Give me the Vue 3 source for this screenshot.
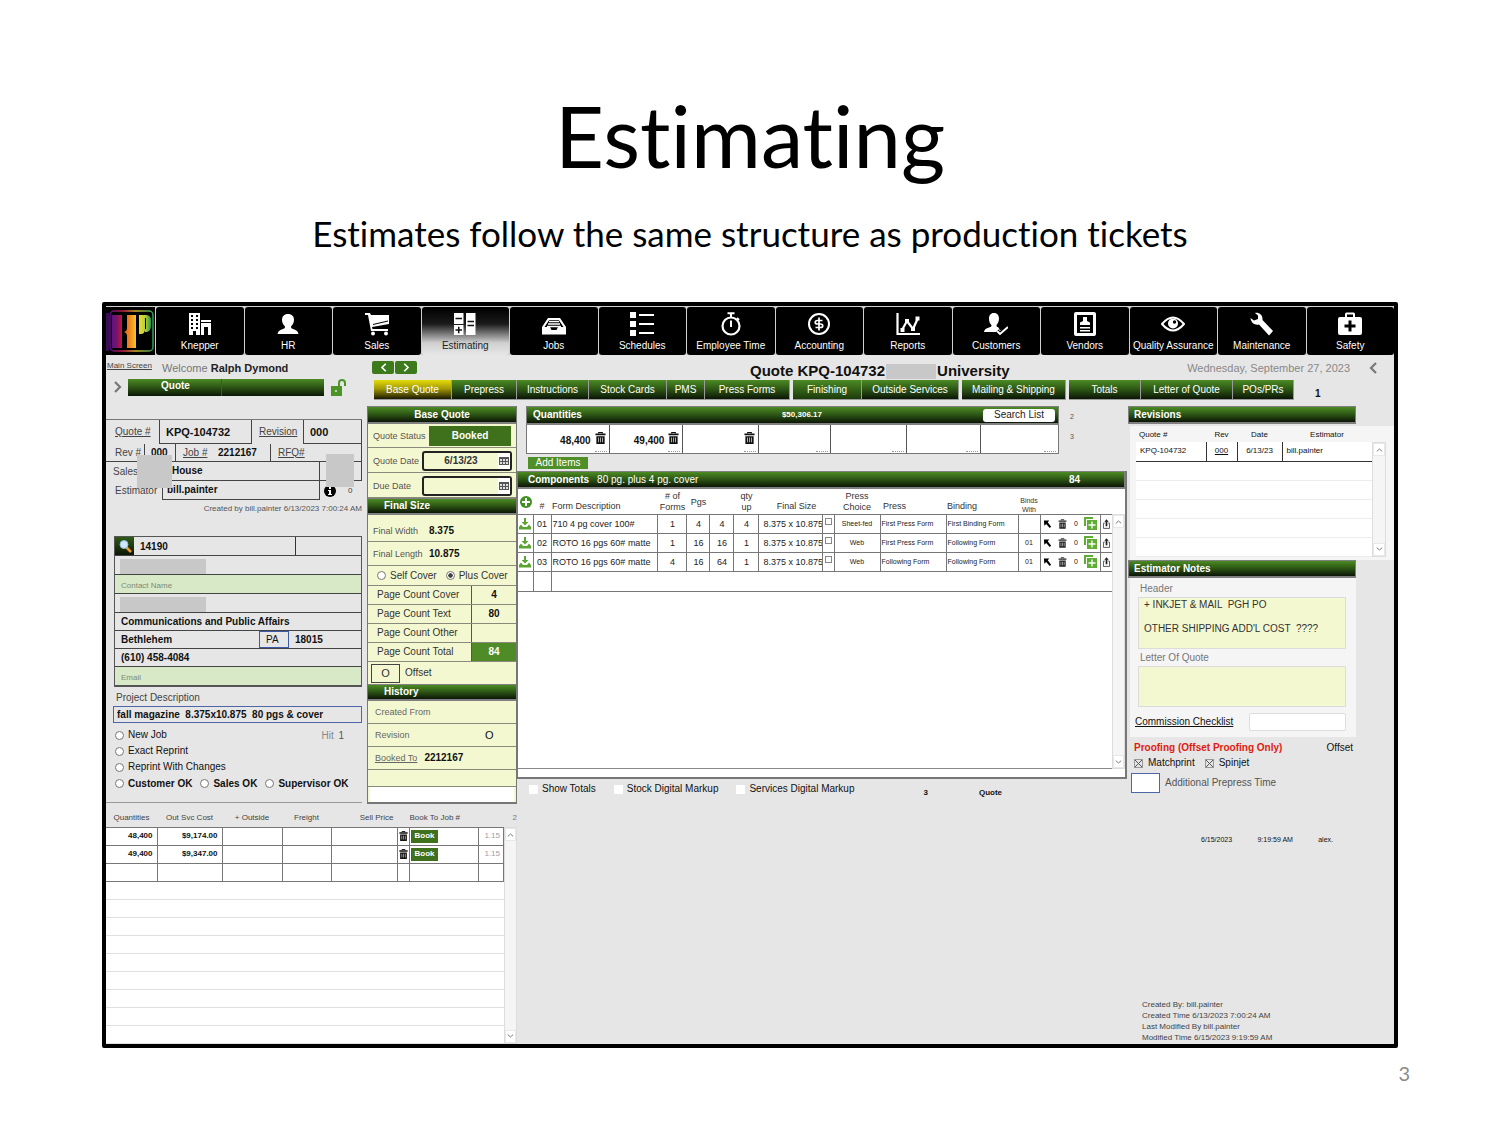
<script setup>
import { ref, reactive } from 'vue'

const modules = [
  { name: 'Knepper', icon: 'building' },
  { name: 'HR', icon: 'person' },
  { name: 'Sales', icon: 'cart' },
  { name: 'Estimating', icon: 'calc' },
  { name: 'Jobs', icon: 'inbox' },
  { name: 'Schedules', icon: 'list' },
  { name: 'Employee Time', icon: 'timer' },
  { name: 'Accounting', icon: 'dollar' },
  { name: 'Reports', icon: 'chart' },
  { name: 'Customers', icon: 'customer' },
  { name: 'Vendors', icon: 'vendor' },
  { name: 'Quality Assurance', icon: 'eye' },
  { name: 'Maintenance', icon: 'wrench' },
  { name: 'Safety', icon: 'safety' }
]
const activeModule = ref('Estimating')

const tabs = ['Base Quote', 'Prepress', 'Instructions', 'Stock Cards', 'PMS', 'Press Forms', 'Finishing',
  'Outside Services', 'Mailing & Shipping', 'Totals', 'Letter of Quote', 'POs/PRs']
const activeTab = ref('Base Quote')

const quote = reactive({
  number: 'KPQ-104732',
  revision: '000',
  rev: '000',
  job: '2212167',
  sales: 'House',
  estimator: 'bill.painter',
  customer: '14190',
  department: 'Communications and Public Affairs',
  city: 'Bethlehem',
  state: 'PA',
  zip: '18015',
  phone: '(610) 458-4084',
  description: 'fall magazine  8.375x10.875  80 pgs & cover',
  date: '6/13/23',
  due: '',
  cover: 'plus',
  header: "+ INKJET & MAIL  PGH PO\n\nOTHER SHIPPING ADD'L COST  ????",
  letter: '',
  commission: '',
  matchprint: true,
  spinjet: true
})

const jobType = ref('')
const approval = ref('')
const pageCounts = [
  { label: 'Page Count Cover', value: '4' },
  { label: 'Page Count Text', value: '80' },
  { label: 'Page Count Other', value: '' },
  { label: 'Page Count Total', value: '84', total: true }
]
const quantities = ['48,400', '49,400', '', null, null, null, null]

const components = [
  { no: '01', desc: '710 4 pg cover 100#', forms: '1', pgs: '4', pgs2: '4', up: '4', choice: 'Sheet-fed', press: 'First Press Form', binding: 'First Binding Form', binds: '' },
  { no: '02', desc: 'ROTO 16 pgs 60# matte', forms: '1', pgs: '16', pgs2: '16', up: '1', choice: 'Web', press: 'First Press Form', binding: 'Following Form', binds: '01' },
  { no: '03', desc: 'ROTO 16 pgs 60# matte', forms: '4', pgs: '16', pgs2: '64', up: '1', choice: 'Web', press: 'Following Form', binding: 'Following Form', binds: '01' }
]

const prices = [
  { qty: '48,400', cost: '$9,174.00' },
  { qty: '49,400', cost: '$9,347.00' }
]
</script>

<template>
  <div class="slide">
    <!-- icon set -->
    <svg class="defs" width="0" height="0">
      <symbol id="building" viewBox="0 0 24 24">
        <path fill="currentColor" fill-rule="evenodd" d="M1 1h11v22H8v-4H5v4H1zM3 3v2h2V3zM8 3v2h2V3zM3 7v2h2V7zM8 7v2h2V7zM3 11v2h2v-2zM8 11v2h2v-2zM3 15v2h2v-2zM8 15v2h2v-2zM13 8h10v2H13zM13 11h10v12h-3v-8h-4v8h-3z" />
      </symbol>
      <symbol id="person" viewBox="0 0 24 24">
        <path fill="currentColor" d="M12 2c4 0 6 2.500 6 6 0 3-1.500 5-3 6.500 0 1.500.5 2 2 2.500 3 .8 5 2 5.500 5h-21C2 19 4 17.800 7 17c1.500-.5 2-1 2-2.500C7.500 13 6 11 6 8c0-3.500 2-6 6-6z" />
      </symbol>
      <symbol id="cart" viewBox="0 0 24 24">
        <path fill="currentColor" d="M0 1h5l1 2h18v9L7 15l.5 2H23v2H6L3 3H0z" />
        <path stroke="#000" stroke-width="1" d="M8 12.500l15-3.500" />
        <circle cx="8" cy="21.500" r="2" fill="currentColor" /><circle cx="21" cy="21.500" r="2" fill="currentColor" />
      </symbol>
      <symbol id="calc" viewBox="0 0 24 24">
        <path fill="currentColor" d="M1 1h9.500v11H1zM1 13h9.500v10H1zM13 1h9.500v22H13z" />
        <path stroke="#111" stroke-width="1.500" d="M2.500 6.500H9M2.500 18H9M5.750 14.700v6.600M14.500 9.500H21M14.500 13.500H21" />
      </symbol>
      <symbol id="inbox" viewBox="0 0 24 24">
        <path fill="currentColor" d="M6 6h12l6 9v7.500H0V15zM7.200 8L2.500 15H8l1.500 3h5l1.500-3h5.500L16.800 8z" fill-rule="evenodd" />
        <path stroke="currentColor" stroke-width="1.400" d="M7 9.500h10M6 12h12M5 14.500h14" />
      </symbol>
      <symbol id="list" viewBox="0 0 24 24">
        <path fill="currentColor" d="M0 0h6v6H0zM0 9h6v6H0zM0 18h6v6H0zM9 2h15v2H9zM9 11h15v2H9zM9 20h15v2H9z" />
      </symbol>
      <symbol id="timer" viewBox="0 0 24 24">
        <circle cx="12" cy="14" r="8.500" fill="none" stroke="currentColor" stroke-width="2.200" />
        <path stroke="currentColor" stroke-width="2" fill="none" d="M8.500 1.300h7M12 1v4M12 8.500V15M18 6l2 2" />
      </symbol>
      <symbol id="dollar" viewBox="0 0 24 24">
        <circle cx="12" cy="12" r="10" fill="none" stroke="currentColor" stroke-width="2" />
        <path stroke="currentColor" stroke-width="1.700" fill="none" d="M15.500 8.500h-5c-3 0-3 3.500 0 3.500h3c3 0 3 3.500 0 3.500h-5M12 5.500v13" />
      </symbol>
      <symbol id="chart" viewBox="0 0 24 24">
        <path stroke="currentColor" stroke-width="2.200" fill="none" d="M1.500 1v21H24M6 18l5-9 6 8 5-11" />
        <path fill="currentColor" d="M4.500 16h4v4h-4zM9 7h4v4H9zM15 15h4v4h-4zM19.500 4.500h4v4h-4z" />
      </symbol>
      <symbol id="customer" viewBox="0 0 24 24">
        <path fill="currentColor" d="M10 1c3.500 0 5 2.500 5 5.500S13.500 12 12.500 13c0 1.500.5 2 2 2.500l1.500 3 3-1.500 0 3H0c.5-2.500 2-3.800 5-4.500 2-.5 2.500-1 2.500-2.500C6 12 5 9.500 5 6.500S6.500 1 10 1z" />
        <path stroke="#000" stroke-width="4" fill="none" d="M13 19l3 3 7-7" /><path stroke="currentColor" stroke-width="2" fill="none" d="M13 19l3 3 8-7" />
      </symbol>
      <symbol id="vendor" viewBox="0 0 24 24">
        <path fill="currentColor" fill-rule="evenodd" d="M3 0h18q2 0 2 2v20q0 2-2 2H3q-2 0-2-2V2q0-2 2-2zM4 3v18h16V3z" />
        <path fill="currentColor" d="M10 5h4v4l3 1.500V13H7v-2.500L10 9zM7 15h10v1.500H7zM7 18h10v1.500H7z" />
      </symbol>
      <symbol id="eye" viewBox="0 0 24 24">
        <path stroke="currentColor" stroke-width="2" fill="none" d="M1 12q11-13 22 0-11 13-22 0z" />
        <circle cx="12" cy="11.500" r="5" fill="currentColor" /><circle cx="13.500" cy="10" r="1.700" fill="#000" />
      </symbol>
      <symbol id="wrench" viewBox="0 0 24 24">
        <path fill="currentColor" d="M5 1c4-.8 8 2 7.500 7L23 19l-4 4.500-10-11C5 13.500 1 11 .5 6L4 8.500l4-1.500V3.500z" />
      </symbol>
      <symbol id="safety" viewBox="0 0 24 24">
        <path fill="currentColor" fill-rule="evenodd" d="M7 5V2q0-1.500 1.500-1.500h7Q17 .5 17 2v3h5q2 0 2 2v14q0 2-2 2H2q-2 0-2-2V7q0-2 2-2zM9 5h6V2.500H9zM10.500 8.500v4h-4v3h4v4h3v-4h4v-3h-4v-4z" />
      </symbol>
      <symbol id="trash" viewBox="0 0 12 14">
        <path fill="none" stroke="currentColor" stroke-width="1.200" d="M4 2V1h4v1" />
        <path fill="currentColor" fill-rule="evenodd" d="M.5 2h11v2H.5zM1.500 5h9v8.500h-9zM3.500 6.500v5h.7v-5zM5.700 6.500v5h.7v-5zM7.900 6.500v5h.7v-5z" />
      </symbol>
      <symbol id="up" viewBox="0 0 10 6"><path d="M1 5l4-3.500L9 5" fill="none" stroke="currentColor" stroke-width="1.300" /></symbol>
      <symbol id="down" viewBox="0 0 10 6"><path d="M1 1l4 3.500L9 1" fill="none" stroke="currentColor" stroke-width="1.300" /></symbol>
      <symbol id="left" viewBox="0 0 8 12"><path d="M7 1L2 6l5 5" fill="none" stroke="currentColor" stroke-width="2.200" /></symbol>
      <symbol id="right" viewBox="0 0 8 12"><path d="M1 1l5 5-5 5" fill="none" stroke="currentColor" stroke-width="2.200" /></symbol>
      <symbol id="calendar" viewBox="0 0 10 10">
        <path fill="#555" d="M0 1h10v8H0z" /><path fill="#ddd" d="M1 3h2v2H1zM4 3h2v2H4zM7 3h2v2H7zM1 6h2v2H1zM4 6h2v2H4zM7 6h2v2H7z" />
      </symbol>
      <symbol id="download" viewBox="0 0 12 12"><path fill="#5aa532" d="M5 0h2v4h2.500L6 7.500 2.500 4H5zM0 9l2-2.500L4 9h4l2-2.500L12 9v2.500H0z" /></symbol>
      <symbol id="arrow" viewBox="0 0 10 10"><path fill="#000" d="M1 1h6L5.300 3 9 8 7.500 9.500 3.500 5 1.500 7z" /></symbol>
      <symbol id="copy" viewBox="0 0 13 13"><path fill="#5fae33" d="M0 0h9v2H2v7H0zM3 3h10v10H3z" /><path stroke="#fff" stroke-width="1.300" d="M8 4.500v7M4.500 8h7" /></symbol>
      <symbol id="share" viewBox="0 0 8 11"><path fill="#222" d="M4 0l2.500 3H5v5H3V3H1.500z" /><path fill="none" stroke="#444" d="M2 4.500H.5v6h7v-6H6" /></symbol>
      <linearGradient id="gPurple"><stop offset="0" stop-color="#5c1480" /><stop offset=".5" stop-color="#7a1468" /><stop offset="1" stop-color="#c4183c" /></linearGradient>
      <linearGradient id="gOrange"><stop offset="0" stop-color="#e3601f" /><stop offset=".5" stop-color="#f08a1d" /><stop offset="1" stop-color="#f7c52b" /></linearGradient>
      <linearGradient id="gGreen"><stop offset="0" stop-color="#e6dc33" /><stop offset=".5" stop-color="#b9cf3a" /><stop offset="1" stop-color="#27984a" /></linearGradient>
      <linearGradient id="gFrame"><stop offset="0" stop-color="#55107a" /><stop offset=".3" stop-color="#c61f45" /><stop offset=".6" stop-color="#d8b52b" /><stop offset="1" stop-color="#2ba15a" /></linearGradient>
    </svg>

    <h1>Estimating</h1>
    <p class="subtitle">Estimates follow the same structure as production tickets</p>

    <div class="app">
      <nav class="modules">
        <a href="#" class="logo" aria-label="Home">
          <svg viewBox="0 0 49 48" preserveAspectRatio="none">
            <rect x="4" y="4" width="43" height="40" rx="4" fill="none" stroke="url(#gFrame)" stroke-width="1.500" />
            <path fill="#3c0b57" d="M0 6h3v38H0z" />
            <path fill="url(#gPurple)" d="M6 8h10v33H6z" />
            <path fill="url(#gOrange)" d="M21 8h9v33h-9V29q0-3-3-4 3-1 3-4z" />
            <path fill="url(#gGreen)" d="M33 8h8q4 1 4 5v5q0 6-4 7h-2v-3h1V11h-1v11q0 5-4 5h-2z" />
          </svg>
        </a>
        <button v-for="m in modules" :key="m.name" :class="{ on: activeModule === m.name }" @click="activeModule = m.name">
          <svg><use :href="'#' + m.icon" /></svg>
          <span>{{ m.name }}</span>
        </button>
      </nav>

      <header class="top">
        <div class="user">
          <div class="welcome">
            <a href="#">Main Screen</a>
            <p>Welcome <b>Ralph Dymond</b></p>
          </div>
          <div class="context">
            <svg class="chev"><use href="#right" /></svg>
            <div class="bar"><span>Quote</span><i></i></div>
            <svg class="lock" viewBox="0 0 16 17"><path fill="#4d9427" d="M0 7h11v10H0z" /><path fill="none" stroke="#4d9427" stroke-width="2" d="M8 8V4q0-3 3-3t3 3v3" /><circle cx="5" cy="12" r="1" fill="#e6e6e6" /></svg>
          </div>
        </div>
        <div class="heading">
          <div class="titleRow">
            <div class="pager">
              <button aria-label="Previous"><svg><use href="#left" /></svg></button>
              <button aria-label="Next"><svg><use href="#right" /></svg></button>
            </div>
            <h2>Quote KPQ-104732<i></i>University</h2>
            <p>Wednesday, September 27, 2023</p>
            <svg class="chev"><use href="#left" /></svg>
          </div>
          <div class="tabRow">
            <div class="tabs">
              <button v-for="t in tabs" :key="t" :class="{ on: activeTab === t }" @click="activeTab = t">{{ t }}</button>
            </div>
            <b>1</b>
          </div>
        </div>
      </header>

      <main class="body">
        <section class="leftSide">
          <div class="upper">
            <div class="info">
              <div class="line first">
                <label class="quoteLabel" for="qn"><u>Quote #</u></label>
                <input id="qn" v-model="quote.number" class="box big qnBox">
                <label class="revLabel" for="rv"><u>Revision</u></label>
                <input id="rv" v-model="quote.revision" class="box big grow">
              </div>
              <div class="line second">
                <label class="reLabel" for="re">Rev #</label>
                <input id="re" v-model="quote.rev" class="box reBox">
                <label class="jobLabel" for="jb"><u>Job #</u></label>
                <input id="jb" v-model="quote.job" class="jobBox">
                <a href="#" class="rfq">RFQ#</a>
              </div>
              <div class="line third">
                <label class="salesLabel" for="sl">Sales</label>
                <input id="sl" v-model="quote.sales" class="box salesBox">
                <span class="box grow"></span>
                <i class="mask maskA"></i><i class="mask maskB"></i>
              </div>
              <div class="line fourth">
                <label class="estLabel" for="es">Estimator</label>
                <input id="es" v-model="quote.estimator" class="box estBox">
                <svg class="infoIcon" viewBox="0 0 12 12"><circle cx="6" cy="6" r="6" /><path fill="#fff" d="M5 2h2v2H5zM4 5h3v4h1v1H4V9h1V6H4z" /></svg>
                <small>0</small>
              </div>
              <p class="created">Created by bill.painter 6/13/2023 7:00:24 AM</p>

              <div class="address">
                <div class="addr">
                  <button class="search" aria-label="Search"><svg viewBox="0 0 14 14"><path stroke="#f0962a" stroke-width="2.500" d="M8.500 8.500L13 13" /><circle cx="6" cy="5.500" r="4" fill="#cfe6fb" stroke="#8bb8e0" /></svg></button>
                  <input v-model="quote.customer" aria-label="Customer number" class="custNo"><span class="custExtra"></span>
                </div>
                <div class="addr"><i class="hidden"></i></div>
                <div class="addr green"><input placeholder="Contact Name" aria-label="Contact Name"></div>
                <div class="addr"><i class="hidden"></i></div>
                <div class="addr"><input v-model="quote.department" aria-label="Department"></div>
                <div class="addr">
                  <input v-model="quote.city" aria-label="City" class="city">
                  <input v-model="quote.state" aria-label="State" class="state">
                  <input v-model="quote.zip" aria-label="Zip" class="zip">
                </div>
                <div class="addr"><input v-model="quote.phone" aria-label="Phone"></div>
                <div class="addr green"><input placeholder="Email" aria-label="Email"></div>
              </div>

              <label class="projLabel" for="pd">Project Description</label>
              <input id="pd" v-model="quote.description" class="project">
              <div class="types">
                <div>
                  <label v-for="t in ['New Job', 'Exact Reprint', 'Reprint With Changes']" :key="t">
                    <input v-model="jobType" type="radio" name="type" :value="t">{{ t }}
                  </label>
                </div>
                <p>Hit <span>1</span></p>
              </div>
              <div class="approvals">
                <label v-for="t in ['Customer OK', 'Sales OK', 'Supervisor OK']" :key="t">
                  <input v-model="approval" type="radio" name="approval" :value="t">{{ t }}
                </label>
              </div>
            </div>

            <div class="base">
              <h3 class="center">Base Quote</h3>
              <div class="row r24"><span class="lab">Quote Status</span><button class="booked">Booked</button></div>
              <div class="row r25">
                <label class="lab" for="qd">Quote Date</label>
                <div class="date"><input id="qd" v-model="quote.date"><button aria-label="Pick quote date"><svg><use href="#calendar" /></svg></button></div>
              </div>
              <div class="row r25">
                <label class="lab" for="dd">Due Date</label>
                <div class="date"><input id="dd" v-model="quote.due"><button aria-label="Pick due date"><svg><use href="#calendar" /></svg></button></div>
              </div>
              <h3>Final Size</h3>
              <div class="row r27"><span class="lab size">Final Width</span><b>8.375</b></div>
              <div class="row r24"><span class="lab size">Final Length</span><b>10.875</b></div>
              <div class="row r20 covers">
                <label><input v-model="quote.cover" type="radio" name="cover" value="self">Self Cover</label>
                <label><input v-model="quote.cover" type="radio" name="cover" value="plus">Plus Cover</label>
              </div>
              <div v-for="p in pageCounts" :key="p.label" class="row r19">
                <span class="pageLabel">{{ p.label }}</span><b class="pageValue" :class="{ total: p.total }">{{ p.value }}</b>
              </div>
              <div class="row r22"><span class="offBox">O</span><span class="off">Offset</span></div>
              <h3>History</h3>
              <div class="row r23 hist"><span>Created From</span></div>
              <div class="row r23 hist"><span class="grow">Revision</span><span class="zero">O</span></div>
              <div class="row r23 hist"><a href="#">Booked To</a><b>2212167</b></div>
              <div class="row r17"></div>
              <div class="blank"></div>
            </div>
          </div>

          <div class="lower">
            <table class="prices">
              <colgroup><col class="p1"><col class="p2"><col class="p3"><col class="p4"><col><col class="p6"><col class="p7"><col class="p8"></colgroup>
              <thead>
                <tr><th>Quantities</th><th>Out Svc Cost</th><th>+ Outside</th><th>Freight</th><th class="right" colspan="2">Sell Price</th><th class="left" colspan="2">Book To Job #</th></tr>
              </thead>
              <tbody>
                <tr v-for="p in prices" :key="p.qty" class="filled">
                  <td class="right">{{ p.qty }}</td><td class="right">{{ p.cost }}</td><td></td><td></td><td></td>
                  <td class="bin"><button aria-label="Delete"><svg><use href="#trash" /></svg></button></td>
                  <td class="bk"><button>Book</button></td><td class="pale">1.15</td>
                </tr>
                <tr class="filled"><td v-for="n in 8" :key="n"></td></tr>
                <tr v-for="n in 9" :key="'e' + n" class="empty"><td colspan="8"></td></tr>
              </tbody>
            </table>
            <div class="side">
              <span>2</span>
              <div class="scroll">
                <button aria-label="Scroll up"><svg><use href="#up" /></svg></button>
                <button aria-label="Scroll down"><svg><use href="#down" /></svg></button>
              </div>
            </div>
          </div>
        </section>

        <section class="middle">
          <div class="qtyRow">
            <div class="qty">
              <h3><span>Quantities</span><small>$50,306.17</small><button>Search List</button></h3>
              <div class="cells">
                <div v-for="(q, i) in quantities" :key="i">
                  <b>{{ q }}</b>
                  <svg v-if="q !== null"><use href="#trash" /></svg>
                  <i></i>
                </div>
              </div>
            </div>
            <div class="nums"><span>2</span><span>3</span></div>
          </div>
          <button class="add">Add Items</button>

          <div class="comp">
            <h3><span>Components</span><em>80 pg. plus 4 pg. cover</em><b>84</b></h3>
            <div class="compBody">
              <table>
                <colgroup>
                  <col class="w15"><col class="w18"><col><col class="w29"><col class="w23"><col class="w24"><col class="w25"><col class="w64"><col class="w11"><col class="w46"><col class="w66"><col class="w72"><col class="w22"><col class="w60"><col class="w13">
                </colgroup>
                <thead>
                  <tr>
                    <th><svg class="plus" viewBox="0 0 12 12"><circle cx="6" cy="6" r="6" fill="#3f8f22" /><path stroke="#fff" stroke-width="2" d="M6 2v8M2 6h8" /></svg></th>
                    <th class="low">#</th><th class="low left flush">Form Description</th><th># of<br>Forms</th><th>Pgs</th><th></th><th>qty<br>up</th>
                    <th class="low" colspan="2">Final Size</th><th>Press<br>Choice</th><th class="low left">Press</th><th class="low left flush">Binding</th><th class="tiny">Binds<br>With</th><th colspan="2"></th>
                  </tr>
                </thead>
                <tbody>
                  <tr v-for="c in components" :key="c.no">
                    <td><svg class="dl"><use href="#download" /></svg></td>
                    <td>{{ c.no }}</td>
                    <td class="left">{{ c.desc }}</td>
                    <td>{{ c.forms }}</td><td>{{ c.pgs }}</td><td>{{ c.pgs2 }}</td><td>{{ c.up }}</td>
                    <td class="fs">8.375 x 10.875</td>
                    <td><input type="checkbox" :aria-label="'Lock size ' + c.no"></td>
                    <td class="sm">{{ c.choice }}</td><td class="sm left">{{ c.press }}</td><td class="sm left">{{ c.binding }}</td><td class="sm">{{ c.binds }}</td>
                    <td>
                      <div class="acts">
                        <svg><use href="#arrow" /></svg><svg><use href="#trash" /></svg><span>0</span><svg class="cp"><use href="#copy" /></svg>
                      </div>
                    </td>
                    <td><svg class="sh"><use href="#share" /></svg></td>
                  </tr>
                  <tr class="last"><td></td><td></td><td colspan="13"></td></tr>
                </tbody>
              </table>
              <div class="scroll">
                <button aria-label="Scroll up"><svg><use href="#up" /></svg></button>
                <button aria-label="Scroll down"><svg><use href="#down" /></svg></button>
              </div>
            </div>
            <div class="compFoot"></div>
          </div>
          <div class="options">
            <label><input type="checkbox">Show Totals</label>
            <label><input type="checkbox">Stock Digital Markup</label>
            <label><input type="checkbox">Services Digital Markup</label>
            <b>3</b><b>Quote</b>
          </div>
        </section>

        <section class="rightSide">
          <h3>Revisions</h3>
          <div class="revPanel">
            <table>
              <colgroup><col class="v1"><col class="v2"><col class="v3"><col></colgroup>
              <thead><tr><th class="left">Quote #</th><th>Rev</th><th>Date</th><th>Estimator</th></tr></thead>
              <tbody>
                <tr class="item"><td>KPQ-104732</td><td class="mid"><a href="#">000</a></td><td class="mid">6/13/23</td><td>bill.painter</td></tr>
                <tr v-for="n in 5" :key="n"><td colspan="4"></td></tr>
              </tbody>
            </table>
            <div class="scroll">
              <button aria-label="Scroll up"><svg><use href="#up" /></svg></button>
              <button aria-label="Scroll down"><svg><use href="#down" /></svg></button>
            </div>
          </div>
          <h3>Estimator Notes</h3>
          <div class="notes">
            <label for="hd">Header</label>
            <textarea id="hd" v-model="quote.header" class="tall"></textarea>
            <label for="lq">Letter Of Quote</label>
            <textarea id="lq" v-model="quote.letter"></textarea>
            <div class="comm"><a href="#">Commission Checklist</a><input v-model="quote.commission" aria-label="Commission"></div>
          </div>
          <div class="proof"><b>Proofing (Offset Proofing Only)</b><span>Offset</span></div>
          <div class="proofs">
            <label><input v-model="quote.matchprint" type="checkbox">Matchprint</label>
            <label><input v-model="quote.spinjet" type="checkbox">Spinjet</label>
          </div>
          <div class="extra"><input id="apt"><label for="apt">Additional Prepress Time</label></div>
          <div class="stamp"><span>6/15/2023</span><span>9:19:59 AM</span><span>alex.</span></div>
          <div class="audit">
            <p>Created By: bill.painter</p>
            <p>Created Time 6/13/2023 7:00:24 AM</p>
            <p>Last Modified By bill.painter</p>
            <p>Modified Time 6/15/2023 9:19:59 AM</p>
          </div>
        </section>
      </main>
    </div>
    <footer>3</footer>
  </div>
</template>

<style>
  body {
    margin: 0;
    background-color: #ffffff;
  }
</style>

<style scoped>
  * {
    box-sizing: border-box;
  }

  h1, h2, h3, p {
    margin: 0;
    font-weight: normal;
  }

  button, input, textarea {
    margin: 0;
    padding: 0;
    border: none;
    border-radius: 0;
    background: none;
    color: inherit;
    font: inherit;
    outline: none;
    min-width: 0;
  }

  button {
    cursor: pointer;
  }

  a {
    color: inherit;
  }

  svg {
    display: block;
    flex: none;
  }

  table {
    border-collapse: collapse;
    table-layout: fixed;
    width: 100%;
  }

  th, td {
    padding: 0;
    font-weight: normal;
    overflow: hidden;
    white-space: nowrap;
  }

  .defs {
    position: absolute;
  }

  .slide {
    padding: 85px 102px 0px 102px;
    font-family: "Lato", sans-serif;
    font-variant-ligatures: none;
    color: #000000;
  }

  h1 {
    font-size: 85px;
    line-height: 100px;
    text-align: center;
  }

  .subtitle {
    margin-top: 24px;
    margin-bottom: 45px;
    font-size: 35px;
    line-height: 48px;
    text-align: center;
  }

  footer {
    padding: 12px 0px;
    margin-right: -12px;
    text-align: right;
    font-size: 20px;
    line-height: 26px;
    color: #8b8b8b;
  }

  .app {
    border: 4px solid #000000;
    border-radius: 2px;
    background-color: #e6e6e6;
    font-family: "Liberation Sans", Arial, sans-serif;
    font-size: 10px;
    line-height: 12px;
    color: #111111;
  }

  /* 绿色标题栏 */
  h3, .bar {
    display: flex;
    align-items: center;
    height: 18px;
    border: 1px solid #808080;
    border-width: 1px 1px 2px 1px;
    background: linear-gradient(#4c8b24, #2f5a15 45%, #0b1606);
    color: #ffffff;
    font-weight: bold;
    font-size: 10px;
  }

  /* 顶部模块 */
  .modules {
    display: grid;
    grid-template-columns: 49px repeat(14, 1fr);
    gap: 1px;
    height: 49px;
    padding-top: 1px;
    background-color: #cfcfcf;
  }

  .logo {
    background-color: #000000;
  }

  .logo svg {
    width: 100%;
    height: 100%;
  }

  .modules button {
    display: flex;
    flex-direction: column;
    align-items: center;
    padding-top: 5px;
    background-color: #000000;
    border-radius: 3px;
    color: #ffffff;
  }

  .modules button svg {
    width: 24px;
    height: 24px;
  }

  .modules button span {
    margin-top: 4px;
    white-space: nowrap;
  }

  .modules button.on {
    background: linear-gradient(#000000, #1a1a1a 35%, #d0d0d0 75%, #e6e6e6);
  }

  .modules button.on span {
    color: #222222;
  }

  .top {
    display: grid;
    grid-template-columns: 262px 1fr;
    height: 45px;
  }

  .welcome {
    display: flex;
    height: 23px;
    padding: 5px 0px 0px 1px;
  }

  .welcome a {
    width: 55px;
    font-size: 8px;
    color: #444444;
  }

  .welcome p {
    padding-top: 2px;
    font-size: 11px;
    color: #777777;
  }

  .welcome b {
    color: #222222;
  }

  .context {
    display: flex;
    align-items: center;
    height: 18px;
    padding-left: 8px;
  }

  .chev {
    width: 8px;
    height: 12px;
    color: #777777;
  }

  .bar {
    flex: 1;
    margin: 0px 7px 0px 6px;
    height: 17px;
    border: none;
  }

  .bar span {
    width: 93px;
    padding: 0px 0px 3px 33px;
  }

  .bar i {
    height: 100%;
    border-left: 1px solid #3c5c2b;
  }

  .lock {
    width: 16px;
    height: 17px;
    margin-right: 21px;
  }

  .titleRow {
    display: grid;
    grid-template-columns: 260px 1fr 180px 27px;
    align-items: center;
    height: 25px;
    padding-left: 4px;
    padding-right: 17px;
  }

  .titleRow .chev {
    justify-self: end;
  }

  .pager {
    display: flex;
    gap: 1px;
  }

  .pager button {
    display: grid;
    place-items: center;
    width: 22px;
    height: 13px;
    border-radius: 2px;
    background-color: #3c7a1b;
    color: #ffffff;
  }

  .pager svg {
    width: 7px;
    height: 9px;
  }

  .titleRow h2 {
    display: flex;
    align-items: center;
    padding-top: 7px;
    padding-left: 118px;
    font-size: 15px;
    line-height: 18px;
    font-weight: bold;
    white-space: nowrap;
  }

  .titleRow h2 i {
    width: 50px;
    height: 15px;
    margin: 0px 1px;
    background-color: #c8c8c8;
  }

  .titleRow p {
    font-size: 11px;
    color: #888888;
    text-align: right;
    white-space: nowrap;
  }

  .tabRow {
    display: flex;
    height: 20px;
    padding-left: 6px;
  }

  .tabRow b {
    width: 100px;
    padding: 8px 0px 0px 21px;
  }

  .tabs {
    flex: 1;
    display: grid;
    grid-template-columns: 78fr 65fr 72fr 78fr 38fr 88fr 69fr 100fr 107fr 72fr 92fr 61fr;
  }

  .tabs button {
    border-right: 1px solid #9a9a9a;
    border-bottom: 1px solid #9a9a9a;
    background: linear-gradient(#4c8b24, #2f5a15 45%, #0b1606);
    color: #ffffff;
    white-space: nowrap;
  }

  .tabs button:nth-child(6), .tabs button:nth-child(8), .tabs button:nth-child(9) {
    margin-right: 3px;
  }

  .tabs button:nth-child(7) {
    background: linear-gradient(#4c8b24, #1c3a0c);
  }

  .tabs button.on {
    background: linear-gradient(#e5db0a, #a49b06 45%, #1a1800);
  }

  .body {
    display: grid;
    grid-template-columns: 411px 1fr 266px;
  }

  .upper {
    display: grid;
    grid-template-columns: 261px 150px;
  }

  .grow {
    flex: 1;
  }

  /* 左侧报价信息 */
  .info {
    margin: 19px 5px 1px 0px;
    border-bottom: 1px solid #999999;
  }

  .line {
    display: flex;
    align-items: center;
    position: relative;
    color: #444444;
  }

  .line input, .address input, .project {
    font-weight: bold;
    color: #111111;
  }

  .box {
    align-self: stretch;
    border: 1px solid #444444;
    border-width: 0px 1px 1px 1px;
    padding-left: 6px;
  }

  .box + .box {
    border-left: none;
  }

  .line .big {
    font-size: 11px;
  }

  .first {
    height: 25px;
    border-top: 1px solid #777777;
  }

  .second {
    height: 18px;
    border-right: 1px solid #444444;
    border-bottom: 1px solid #444444;
  }

  .third, .fourth {
    height: 19px;
  }

  .quoteLabel { width: 53px; padding-left: 9px; }
  .qnBox { width: 93px; }
  .revLabel { width: 51px; padding-left: 7px; }
  .reLabel { width: 38px; padding-left: 9px; }
  .reBox { width: 32px; border-bottom: none; }
  .jobLabel { width: 35px; padding-left: 7px; }
  .jobBox { width: 60px; height: 17px; padding-left: 7px; border-right: 1px solid #444444; }
  .rfq { padding-left: 7px; }
  .salesLabel { width: 38px; padding-left: 7px; }
  .salesBox { width: 176px; padding-left: 28px; border-left: none; }
  .estLabel { width: 56px; padding-left: 9px; }
  .estBox { width: 158px; padding-left: 4px; }

  .second label, .second a {
    white-space: nowrap;
  }

  .mask {
    position: absolute;
    background-color: #c8c8c8;
    z-index: 1;
  }

  .maskA {
    left: 31px;
    top: -7px;
    width: 35px;
    height: 33px;
  }

  .maskB {
    right: 8px;
    top: -8px;
    width: 28px;
    height: 33px;
  }

  .infoIcon {
    width: 12px;
    height: 12px;
    margin: 0px 12px 0px 4px;
  }

  .line small {
    font-size: 8px;
  }

  .created {
    margin-bottom: 18px;
    line-height: 18px;
    font-size: 8px;
    text-align: right;
    white-space: nowrap;
    color: #555555;
  }

  .address {
    margin-left: 8px;
    border: 1px solid #555555;
    border-bottom-width: 2px;
  }

  .addr {
    display: flex;
    align-items: center;
    height: 19px;
    border-bottom: 1px solid #444444;
  }

  .addr:nth-child(n + 5) {
    height: 18px;
  }

  .addr:last-child {
    border-bottom: none;
  }

  .addr input {
    flex: 1;
    height: 100%;
    padding-left: 6px;
  }

  .addr .state {
    flex: none;
    width: 30px;
    border: 1px solid #3c5aa8;
    font-weight: normal;
  }

  .addr .zip {
    flex: none;
    width: 72px;
  }

  .green {
    background-color: #d8e9c8;
  }

  input::placeholder {
    color: #7d8a74;
    font-size: 8px;
    font-weight: normal;
    opacity: 1;
  }

  .search {
    display: grid;
    place-items: center;
    width: 19px;
    height: 100%;
    background: linear-gradient(#2f5a15, #0b1606);
  }

  .search svg {
    width: 14px;
    height: 14px;
  }

  .custExtra {
    width: 66px;
    height: 100%;
    border-left: 1px solid #333333;
  }

  .hidden {
    align-self: flex-end;
    width: 86px;
    height: 15px;
    margin-left: 5px;
    background-color: #c8c8c8;
  }

  .projLabel {
    display: block;
    padding: 5px 0px 0px 10px;
    color: #444444;
  }

  .project {
    display: block;
    width: calc(100% - 7px);
    height: 17px;
    margin: 2px 0px 4px 7px;
    padding-left: 3px;
    border: 1px solid #4c66a8;
  }

  .types, .approvals {
    display: flex;
    justify-content: space-between;
    padding-left: 9px;
  }

  .types label {
    display: flex;
    align-items: center;
    height: 16px;
  }

  .types p {
    padding: 3px 18px 0px 0px;
    color: #888888;
  }

  .types span {
    padding-left: 2px;
    color: #555555;
  }

  .approvals {
    justify-content: flex-start;
    gap: 8px;
    height: 24px;
    padding-bottom: 7px;
    font-weight: bold;
    white-space: nowrap;
  }

  .approvals label {
    display: flex;
    align-items: center;
  }

  input[type=radio] {
    appearance: none;
    width: 9px;
    height: 9px;
    margin-right: 4px;
    border: 1px solid #777777;
    border-radius: 50%;
    background-color: #ffffff;
  }

  input[type=radio]:checked {
    background: radial-gradient(#444444 40%, #ffffff 50%);
  }

  /* Base Quote 面板 */
  .base {
    margin-top: 6px;
    border: 1px solid #777777;
    border-width: 0px 1px 2px 1px;
    background-color: #f4f8d0;
  }

  .base h3 {
    height: 17px;
    padding-left: 16px;
    border-left: none;
    border-right: none;
  }

  .base h3.center {
    height: 18px;
    padding: 0px;
    justify-content: center;
  }

  .row {
    display: flex;
    align-items: center;
    border-bottom: 1px solid #8a8a7c;
    white-space: nowrap;
    color: #333333;
  }

  .row b {
    color: #111111;
  }

  .r17 { height: 17px; }
  .r19 { height: 19px; }
  .r20 { height: 20px; }
  .r22 { height: 22px; border-bottom: none; }
  .r23 { height: 23px; }
  .r24 { height: 24px; }
  .r25 { height: 25px; padding-top: 1px; }
  .r27 { height: 27px; padding-top: 6px; }

  .lab {
    width: 54px;
    padding-left: 5px;
    font-size: 9px;
    color: #555555;
  }

  .size {
    width: 61px;
  }

  .booked {
    width: 82px;
    height: 20px;
    margin-left: 7px;
    background-color: #3f701b;
    color: #ffffff;
    font-weight: bold;
  }

  .date {
    display: flex;
    width: 90px;
    height: 20px;
    border: 2px solid #222222;
    border-radius: 3px;
  }

  .date input {
    flex: 1;
    width: 0;
    font-weight: bold;
    text-align: center;
  }

  .date button {
    display: grid;
    place-items: center;
    width: 12px;
    background-color: #ffffff;
  }

  .date svg {
    width: 10px;
    height: 10px;
  }

  .covers label {
    display: flex;
    align-items: center;
    padding-left: 9px;
  }

  .pageLabel {
    flex: 1;
    padding-left: 9px;
  }

  .pageValue {
    width: 45px;
    height: 100%;
    line-height: 18px;
    border-left: 1px solid #555555;
    text-align: center;
  }

  .row .total {
    background-color: #4f8c27;
    color: #ffffff;
  }

  .offBox {
    width: 29px;
    height: 19px;
    margin-left: 3px;
    border: 1px solid #444444;
    line-height: 17px;
    text-align: center;
    font-size: 11px;
  }

  .off {
    padding-left: 5px;
  }

  .hist span, .hist a {
    padding-left: 7px;
    font-size: 9px;
    color: #666666;
  }

  .hist b {
    padding-left: 7px;
  }

  .hist .zero {
    width: 31px;
    padding: 0px;
    font-size: 11px;
    color: #111111;
  }

  .blank {
    height: 15px;
    margin: 0px 2px;
    background-color: #ffffff;
  }

  /* 价格表 */
  .lower {
    display: grid;
    grid-template-columns: 1fr 13px;
    font-size: 8px;
  }

  .p1 { width: 51px; }
  .p2 { width: 65px; }
  .p3 { width: 60px; }
  .p4 { width: 49px; }
  .p6 { width: 12px; }
  .p7 { width: 69px; }
  .p8 { width: 25px; }

  .prices th {
    height: 23px;
    padding-top: 6px;
    color: #444444;
  }

  .prices tbody {
    background-color: #ffffff;
  }

  .prices td {
    height: 18px;
    border-bottom: 1px solid #e0e0e0;
  }

  .prices .filled td {
    border: 1px solid #777777;
    font-weight: bold;
  }

  .prices .filled td:first-child {
    border-left: none;
  }

  .prices th.left, .left {
    text-align: left;
  }

  .prices th.right {
    padding-right: 16px;
    text-align: right;
  }

  .prices td.right {
    padding-right: 4px;
    text-align: right;
  }

  .prices .filled .pale {
    padding-right: 3px;
    text-align: right;
    font-weight: normal;
    color: #a0a0a0;
  }

  .bin svg {
    width: 9px;
    height: 12px;
  }

  .bin button {
    display: block;
    margin: auto;
  }

  .bk button {
    display: block;
    width: 27px;
    height: 13px;
    margin-left: 1px;
    background-color: #3f701b;
    color: #ffffff;
    line-height: 12px;
  }

  .side {
    display: flex;
    flex-direction: column;
  }

  .side span {
    height: 23px;
    padding-top: 8px;
    text-align: right;
    color: #777777;
  }

  .scroll {
    flex: 1;
    display: flex;
    flex-direction: column;
    justify-content: space-between;
    background-color: #f5f5f5;
    border: 1px solid #dddddd;
  }

  .scroll button {
    display: grid;
    place-items: center;
    height: 13px;
    background-color: #ffffff;
    border: 1px solid #e8e8e8;
    color: #666666;
  }

  .scroll svg {
    width: 7px;
    height: 4px;
  }

  /* 中间部分 */
  .middle {
    padding-top: 6px;
  }

  .qtyRow {
    display: flex;
    padding-left: 9px;
  }

  .qty {
    flex: 1;
  }

  .qty h3 {
    height: 19px;
    padding-left: 6px;
  }

  .qty h3 small {
    flex: 1;
    padding-left: 200px;
    font-size: 8px;
  }

  .qty h3 button {
    width: 72px;
    height: 13px;
    margin-right: 3px;
    border-radius: 3px;
    background-color: #ffffff;
    color: #222222;
    font-weight: normal;
    line-height: 12px;
  }

  .cells {
    display: grid;
    grid-template-columns: 83fr 74fr 76fr 72fr 76fr 75fr 77fr;
    height: 29px;
    border: 1px solid #777777;
    border-top: none;
    background-color: #ffffff;
  }

  .cells div {
    display: grid;
    grid-template-columns: 1fr 12px;
    grid-template-rows: 20px 2px;
    align-items: center;
    gap: 2px 4px;
    padding: 3px 2px 0px 0px;
    border-right: 1px solid #555555;
    text-align: right;
  }

  .cells div:last-child {
    border-right: none;
  }

  .cells b {
    padding-top: 6px;
  }

  .cells svg {
    width: 11px;
    height: 14px;
  }

  .cells i {
    grid-column: 2;
    grid-row: 2;
    border-bottom: 1px dotted #999999;
  }

  .nums {
    display: flex;
    flex-direction: column;
    gap: 8px;
    width: 69px;
    padding: 5px 0px 0px 11px;
    font-size: 7px;
    color: #555555;
  }

  .add {
    display: block;
    width: 60px;
    height: 12px;
    margin: 3px 0px 2px 11px;
    background-color: #4f8f28;
    color: #ffffff;
  }

  .comp {
    margin-right: 1px;
    border: 1px solid #777777;
    border-width: 0px 2px 2px 1px;
    background-color: #ffffff;
  }

  .comp h3 {
    border-left: none;
    padding: 0px 44px 0px 10px;
  }

  .comp h3 em {
    flex: 1;
    padding-left: 8px;
    font-style: normal;
    font-weight: normal;
  }

  .compBody {
    display: grid;
    grid-template-columns: 1fr 13px;
    align-items: start;
    height: 280px;
    border-bottom: 1px solid #888888;
  }

  .compBody .scroll {
    height: 255px;
    margin-top: 25px;
    align-self: start;
  }

  .compFoot {
    height: 8px;
  }

  .w11 { width: 11px; }
  .w13 { width: 12px; }
  .w15 { width: 15px; }
  .w18 { width: 18px; }
  .w22 { width: 22px; }
  .w23 { width: 23px; }
  .w24 { width: 24px; }
  .w25 { width: 25px; }
  .w29 { width: 29px; }
  .w46 { width: 46px; }
  .w60 { width: 60px; }
  .w64 { width: 64px; }
  .w66 { width: 66px; }
  .w72 { width: 72px; }

  .comp th {
    height: 25px;
    padding-top: 2px;
    font-size: 9px;
    line-height: 11px;
    color: #333333;
    vertical-align: middle;
  }

  .comp .low {
    vertical-align: bottom;
    padding-bottom: 2px;
  }

  .comp th.left {
    padding-left: 3px;
  }

  .comp th.flush {
    padding-left: 1px;
  }

  .comp .tiny {
    font-size: 7px;
    line-height: 9px;
    vertical-align: bottom;
  }

  .plus {
    width: 12px;
    height: 12px;
    margin: auto;
  }

  .comp td {
    height: 19px;
    border: 1px solid #777777;
    font-size: 9px;
    text-align: center;
    color: #222222;
  }

  .comp td.left {
    padding-left: 1px;
    text-align: left;
  }

  .comp td.fs {
    padding-left: 4px;
  }

  .comp td.sm {
    font-size: 7px;
  }

  .comp td:first-child {
    border-left: none;
  }

  .comp td:last-child {
    border-right: none;
  }

  .comp .last td {
    height: 20px;
  }

  .dl {
    width: 12px;
    height: 12px;
    margin: auto;
  }

  .sh {
    width: 7px;
    height: 10px;
    margin: auto;
  }

  .comp td input {
    appearance: none;
    display: block;
    width: 7px;
    height: 7px;
    margin: 0px auto 4px;
    border: 1px solid #888888;
  }

  .acts {
    display: flex;
    align-items: center;
    justify-content: space-between;
    padding: 0px 2px 0px 2px;
    font-size: 7px;
  }

  .acts svg {
    width: 9px;
    height: 10px;
  }

  .acts .cp {
    width: 13px;
    height: 13px;
  }

  .options {
    display: flex;
    align-items: center;
    padding: 2px 0px 0px 12px;
  }

  .options label {
    display: flex;
    align-items: center;
    margin-right: 18px;
    white-space: nowrap;
  }

  .options input {
    appearance: none;
    width: 9px;
    height: 9px;
    margin-right: 4px;
    background-color: #ffffff;
  }

  .options b {
    margin: 8px 0px 0px 51px;
    font-size: 8px;
    line-height: 8px;
  }

  /* 右侧部分 */
  .rightSide {
    display: flex;
    flex-direction: column;
    padding-top: 6px;
  }

  .rightSide h3 {
    width: 228px;
    padding-left: 5px;
  }

  .revPanel {
    display: grid;
    grid-template-columns: 1fr 14px;
    height: 134px;
    margin: 2px 0px 0px 2px;
    padding: 0px 8px 4px 6px;
    background-color: #f5f5f5;
    font-size: 8px;
  }

  .revPanel .scroll {
    margin-top: 16px;
  }

  .v1 { width: 70px; }
  .v2 { width: 31px; }
  .v3 { width: 45px; }

  .revPanel th {
    height: 16px;
    padding-top: 2px;
  }

  .revPanel th.left {
    padding-left: 3px;
  }

  .revPanel td {
    height: 19px;
    background-color: #ffffff;
    border-bottom: 1px solid #ececec;
  }

  .revPanel .item td {
    padding-left: 4px;
    border-right: 1px solid #333333;
    border-bottom: 1px solid #333333;
  }

  .revPanel .item td.mid {
    padding-left: 0px;
    text-align: center;
  }

  .revPanel .item td:last-child {
    border-right: none;
  }

  .notes {
    width: 226px;
    margin-left: 2px;
    padding: 5px 10px 6px 8px;
    background-color: #f5f5f5;
  }

  .notes label {
    display: block;
    padding-left: 2px;
    color: #777777;
  }

  .notes textarea {
    display: block;
    width: 100%;
    height: 41px;
    margin: 2px 0px 3px 0px;
    padding: 1px 5px;
    border: 1px solid #dcdcdc;
    background-color: #f4f8d0;
    resize: none;
    overflow: hidden;
    color: #333333;
    white-space: pre-wrap;
  }

  .notes textarea.tall {
    height: 52px;
  }

  .comm {
    display: flex;
    justify-content: space-between;
    align-items: center;
    margin: 6px 0px 0px -3px;
  }

  .comm input {
    width: 97px;
    height: 18px;
    border: 1px solid #dddddd;
    border-radius: 2px;
    background-color: #ffffff;
  }

  .proof {
    display: flex;
    justify-content: space-between;
    width: 225px;
    padding: 5px 0px 2px 6px;
    white-space: nowrap;
  }

  .proof b {
    color: #e01b10;
  }

  .proofs {
    display: flex;
    gap: 10px;
    padding: 1px 0px 0px 6px;
  }

  .proofs label {
    display: flex;
    align-items: center;
  }

  .proofs input {
    appearance: none;
    width: 9px;
    height: 9px;
    margin-right: 5px;
    border: 1px solid #999999;
    background-color: #eeeeee;
  }

  .proofs input:checked {
    background: linear-gradient(45deg, transparent 45%, #555555 45% 55%, transparent 55%), linear-gradient(-45deg, transparent 45%, #555555 45% 55%, transparent 55%);
  }

  .extra {
    display: flex;
    align-items: center;
    gap: 5px;
    padding: 4px 0px 0px 3px;
    color: #555555;
  }

  .extra input {
    width: 29px;
    height: 20px;
    border: 1px solid #4c66a8;
    background-color: #ffffff;
  }

  .stamp {
    display: flex;
    justify-content: space-between;
    width: 205px;
    padding: 41px 0px 0px 73px;
    font-size: 7px;
  }

  .audit {
    margin-top: auto;
    padding: 0px 0px 1px 14px;
    font-size: 8px;
    line-height: 11px;
    color: #444444;
  }
</style>
